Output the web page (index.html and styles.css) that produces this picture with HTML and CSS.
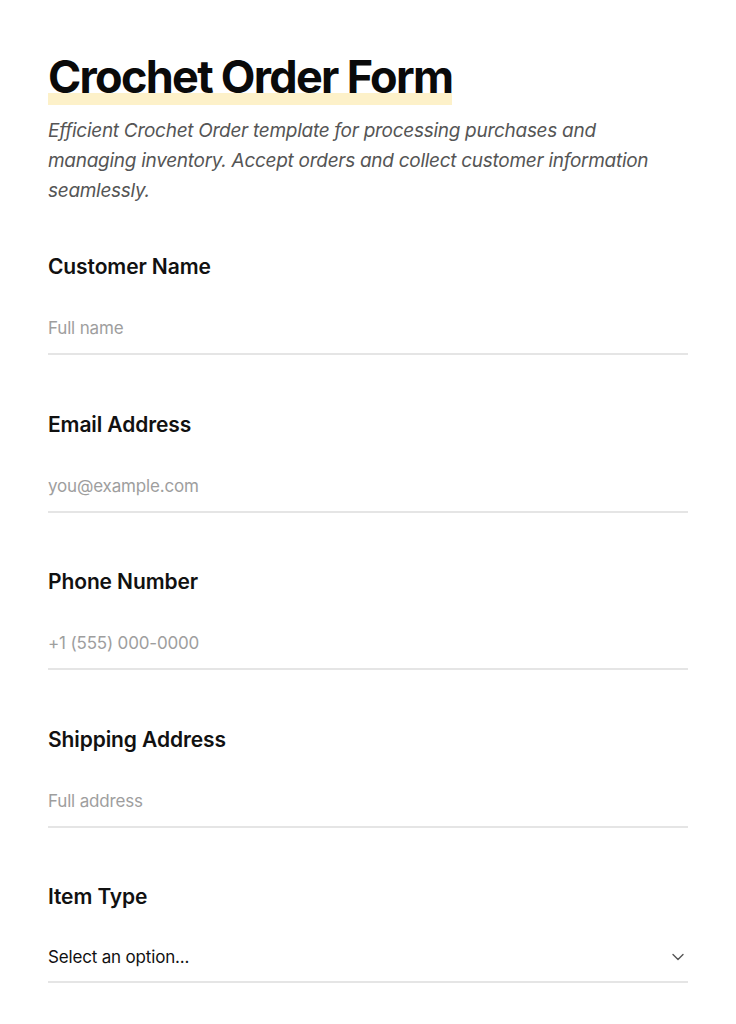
FILE: index.html
```html
<!DOCTYPE html>
<html lang="en">
<head>
<meta charset="utf-8">
<title>Crochet Order Form</title>
<link rel="stylesheet" href="styles.css">
</head>
<body>
<main class="page">
  <header class="intro">
    <h1 class="title"><span class="title-mark">Crochet Order Form</span></h1>
    <p class="desc">Efficient Crochet Order template for processing purchases and managing inventory. Accept orders and collect customer information seamlessly.</p>
  </header>
  <form class="form">
    <div class="field">
      <label class="label" for="name">Customer Name</label>
      <input class="input" id="name" type="text" placeholder="Full name">
    </div>
    <div class="field">
      <label class="label" for="email">Email Address</label>
      <input class="input" id="email" type="email" placeholder="you@example.com">
    </div>
    <div class="field">
      <label class="label" for="phone">Phone Number</label>
      <input class="input" id="phone" type="tel" placeholder="+1 (555) 000-0000">
    </div>
    <div class="field">
      <label class="label" for="addr">Shipping Address</label>
      <input class="input" id="addr" type="text" placeholder="Full address">
    </div>
    <div class="field">
      <label class="label" for="item">Item Type</label>
      <div class="select-wrap">
        <select class="input select" id="item">
          <option>Select an option...</option>
        </select>
        <svg class="chevron" width="14" height="14" viewBox="0 0 14 14" aria-hidden="true"><path d="M2 4.5 L7 9.5 L12 4.5" fill="none" stroke="#555" stroke-width="1.4" stroke-linecap="round" stroke-linejoin="round"/></svg>
      </div>
    </div>
  </form>
</main>
</body>
</html>
```
FILE: styles.css
```css
* { box-sizing: border-box; }
html, body { margin: 0; padding: 0; background: #fff; }
body {
  font-family: Inter, "Noto Sans", sans-serif;
  color: #111;
}
.page {
  padding: 52px 48px 0;
}
.intro { margin: 0; }
.title {
  margin: 0;
  font-size: 45px;
  line-height: 50px;
  font-weight: 700;
  letter-spacing: -0.038em;
  color: #0a0a0a;
}
.title-mark {
  display: inline-block;
  background: linear-gradient(to bottom, transparent 41px, #fdf1c9 41px, #fdf1c9 53px, transparent 53px);
  padding-bottom: 3px;
}
.desc {
  margin: 11px 0 0;
  font-size: 19px;
  line-height: 30px;
  font-style: italic;
  color: #555;
  letter-spacing: -0.015em;
}
.form {
  margin-top: 46px;
  display: flex;
  flex-direction: column;
  gap: 54.5px;
}
.field {
  display: flex;
  flex-direction: column;
}
.label {
  font-size: 21px;
  line-height: 30px;
  font-weight: 600;
  letter-spacing: -0.005em;
  color: #111;
}
.input {
  margin-top: 21px;
  height: 52px;
  width: 100%;
  border: 0;
  border-bottom: 2px solid #e5e5e5;
  padding: 0;
  font-family: inherit;
  font-size: 17px;
  letter-spacing: -0.01em;
  color: #111;
  background: transparent;
  outline: none;
  border-radius: 0;
}
.input::placeholder { color: #9e9e9e; }
.select-wrap { position: relative; margin-top: 21px; }
.select {
  margin-top: 0;
  height: 50px;
  appearance: none;
  -webkit-appearance: none;
  color: #111;
}
.chevron {
  position: absolute;
  right: 3px;
  top: 17px;
  pointer-events: none;
}
```
